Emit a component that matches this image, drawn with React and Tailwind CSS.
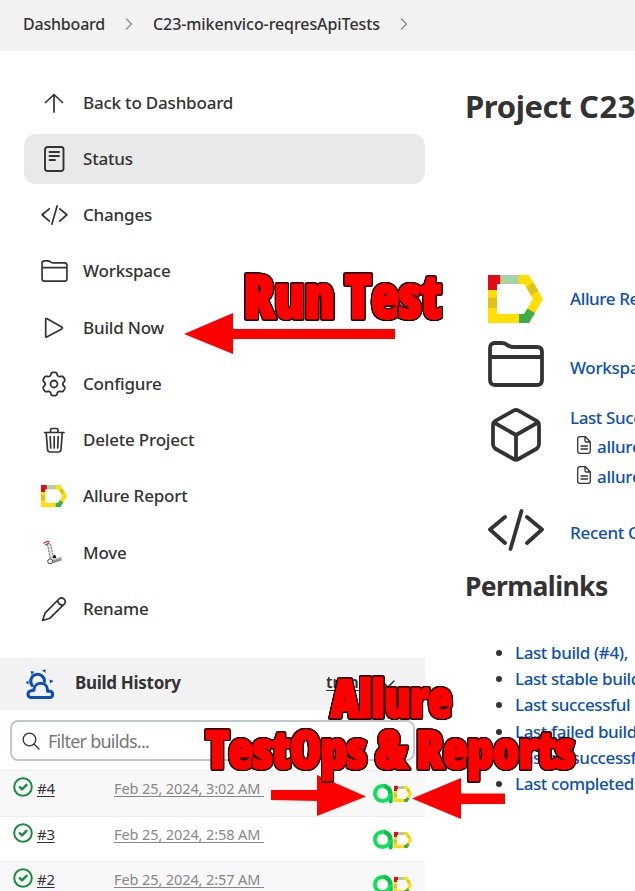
const stroke = {
  fill: 'none',
  stroke: 'currentColor',
  strokeLinecap: 'round',
  strokeLinejoin: 'round',
};

function AllureLogo({ className }) {
  return (
    <svg viewBox="0 0 55 48" className={className} preserveAspectRatio="none">
      <path d="M0 0H41L55 24L41 48H0ZM9 9V39H36L45 24L36 9Z" fill="#ffde00" fillRule="evenodd" />
      <path d="M0 0H12.5V9H9V15H0Z" fill="#e50914" />
      <path d="M12.5 0H30.5V9H12.5Z" fill="#a6d2a5" />
      <path d="M0 22.5H9V33H0ZM38.5 12L45.5 7.5L50.5 16L43 20.5Z" fill="#dfc417" />
      <path d="M31 39H36L39.5 33.5L47 38L41 48H31Z" fill="#3dac49" />
    </svg>
  );
}

function TestOpsLogo() {
  return (
    <svg viewBox="0 0 20 21" className="h-[21px] w-5">
      <path d="M11.500 2.900A7.900 7.900 0 0 1 17.700 10.500V18.600" fill="none" stroke="#09c040" strokeWidth="4" strokeLinecap="round" />
      <circle cx="9.5" cy="10.5" r="7.6" fill="none" stroke="#08e455" strokeWidth="3.8" />
      <path d="M11.500 3.200A7.600 7.600 0 0 1 17.200 10.500" fill="none" stroke="#09c040" strokeWidth="3.8" />
    </svg>
  );
}

function Code({ className, w }) {
  return (
    <svg viewBox="0 0 56 42" className={className} {...stroke} strokeWidth={w}>
      <path d="M17 8L2 20.5L17 34M39 8L54 20.5L39 34M33.5 2L22.5 40" />
    </svg>
  );
}

function Folder({ className, w }) {
  return (
    <svg viewBox="0 0 56 46" className={className} {...stroke} strokeWidth={w}>
      <path d="M2 16V7Q2 2 7 2H14Q17 2 20 4.500Q22.500 6 26 6H49Q54 6 54 11V39Q54 44 49 44H7Q2 44 2 39V16H54" />
    </svg>
  );
}

function ArrowUp() {
  return (
    <svg viewBox="0 0 26 26" className="size-[26px]" {...stroke} strokeWidth="1.7">
      <path d="M13 22V4.500M4.500 12.500L13 4.500L21.500 12.500" />
    </svg>
  );
}

function Status() {
  return (
    <svg viewBox="0 0 26 26" className="size-[26px]" {...stroke} strokeWidth="1.9">
      <rect x="4" y="1" width="18.500" height="24" rx="2.500" />
      <path d="M8.500 6H18M8.500 10H18M8.500 14H14" />
    </svg>
  );
}

function Play() {
  return (
    <svg viewBox="0 0 26 26" className="size-[26px]" {...stroke} strokeWidth="1.7">
      <path d="M4.700 4.200Q4.700 3.200 5.700 3.600L20.700 12Q22 13 20.700 13.900L5.700 22Q4.700 22.300 4.700 21.300Z" />
    </svg>
  );
}

const gearOutline = Array.from({ length: 120 }, (_, i) => {
  const angle = (i * Math.PI) / 60;
  const radius = 10.2 + 1.5 * Math.tanh(1.8 * Math.cos(6 * angle) + 0.5);
  return `${(13 + radius * Math.sin(angle)).toFixed(2)} ${(13 - radius * Math.cos(angle)).toFixed(2)}`;
}).join('L');

function Gear() {
  return (
    <svg viewBox="0 0 26 26" className="size-[26px]" {...stroke} strokeWidth="1.8">
      <circle cx="13" cy="13" r="3.5" />
      <path d={`M${gearOutline}Z`} />
    </svg>
  );
}

function Trash() {
  return (
    <svg viewBox="0 0 26 26" className="size-[26px]" {...stroke} strokeWidth="1.7">
      <path d="M3.500 5.500H23M5.200 5.500L6.500 22.500Q6.800 25 9 25H17.500Q19.700 25 20 22.500L21.300 5.500M9.500 5V3Q9.500 1.500 11 1.500H15.500Q17 1.500 17 3V5M13.200 9.500V21M9.200 9.500L9.700 21M17.200 9.500L16.700 21" />
    </svg>
  );
}

function Dolly() {
  return (
    <svg viewBox="0 0 26 26" className="size-[26px]">
      <path d="M6.500 4.500L9.500 4L12.500 18L9.500 20Z" fill="#e4e4e4" />
      <path d="M6.500 4.500L9.500 20M9.500 4L12.500 17" fill="none" stroke="#666" strokeWidth="1" strokeDasharray="2 1" />
      <path d="M2.500 3.500L5 1.800L8.500 1.500M4 5L8.500 3.200" fill="none" stroke="#b93a44" strokeWidth="1.300" />
      <path d="M10.500 20.500L20.500 17V20.500L12 23.200Z" fill="#8f8f8f" />
      <path d="M12 18.500L20.500 16.500V18L12 20.500Z" fill="#c3c7bc" />
      <path d="M11.500 18Q12 13.500 15 16V18Z" fill="#222" />
      <circle cx="9.200" cy="21.300" r="2.500" fill="#eee" stroke="#444" strokeWidth="1" />
    </svg>
  );
}

function Pencil() {
  return (
    <svg viewBox="0 0 26 26" className="size-[26px]" {...stroke} strokeWidth="1.7">
      <path d="M1.500 24.500L4 17.200L18 3Q20.300 .8 23 3Q25.500 5.500 23.200 8.200L9 22.200ZM16.700 4.500Q17.500 9 22 9.300" />
    </svg>
  );
}

function Weather() {
  return (
    <svg viewBox="0 0 30 32" className="h-8 w-[30px] text-[#0b4fb8]" {...stroke} strokeWidth="3">
      <path d="M4.800 29.500H24.200A3.200 3.200 0 0 0 24.200 23.300H21.500V21.500A6.800 6.800 0 0 0 8 21V22.300Q2 22.500 2 26Q2 29.300 4.800 29.500Z" />
      <path d="M6.200 17.500A6.900 6.900 0 1 1 18.500 13.500" />
      <path d="M4.500 3L8.500 3.700L5.500 6.800ZM16 2.500L19.500 1.200V5ZM-.2 14.500L2.500 12.500V16.500ZM23.500 11.500L27.500 13L24 15.500Z" fill="currentColor" stroke="none" />
    </svg>
  );
}

function Cube() {
  return (
    <svg viewBox="0 0 50 54" className="h-[54px] w-[50px]" {...stroke} strokeWidth="3.800">
      <path d="M22.500 2.700Q25 1.300 27.500 2.700L46 13.200Q48 14.500 48 17V36Q48 39 46 40.500L27.500 51Q25 52.500 22.500 51L4 40.500Q2 39 2 36V17Q2 14.500 4 13.200ZM3 14.500L25 27L47 14.500M25 27V51" />
    </svg>
  );
}

function Doc() {
  return (
    <svg viewBox="0 0 14 18" className="h-[18px] w-3.5 shrink-0" {...stroke} strokeWidth="1.300">
      <path d="M8.500 .7H3Q.7 .7 .7 3V15Q.7 17.300 3 17.300H11Q13.300 17.300 13.300 15V6ZM8 .7V4.500Q8 6 9.500 6H13.300M4 10H10.500M4 13H10.500" />
    </svg>
  );
}

function Check() {
  return (
    <svg viewBox="0 0 20 20" className="size-5 text-[#158f3e]" {...stroke} strokeWidth="2">
      <circle cx="10" cy="10" r="8.800" />
      <path d="M6.800 10.200L9 12.300L13.500 7.800" strokeWidth="2.400" />
    </svg>
  );
}

function Chevron() {
  return (
    <svg viewBox="0 0 8 12" className="h-3 w-2 shrink-0 text-[#909090]" {...stroke} strokeWidth="1.500">
      <path d="M1.500 1L6.500 6L1.500 11" />
    </svg>
  );
}

const tasks = [
  ['Back to Dashboard', <ArrowUp />],
  ['Status', <Status />, true],
  ['Changes', <Code className="h-5 w-[27px]" w="3.6" />],
  ['Workspace', <Folder className="h-[22px] w-[27px]" w="3.5" />],
  ['Build Now', <Play />],
  ['Configure', <Gear />],
  ['Delete Project', <Trash />],
  ['Allure Report', <AllureLogo className="h-[22px] w-[26px]" />],
  ['Move', <Dolly />],
  ['Rename', <Pencil />],
];

const builds = [
  ['#4', 'Feb 25, 2024, 3:02 AM', 'h-[46px] bg-[#f8f8f8]'],
  ['#3', 'Feb 25, 2024, 2:58 AM', 'h-[45px] bg-white'],
  ['#2', 'Feb 25, 2024, 2:57 AM', 'h-[45px] bg-[#f8f8f8]'],
];

const permalinks = [
  'Last build (#4),',
  'Last stable build (#4),',
  'Last successful build (#4),',
  'Last failed build (#1),',
  'Last unsuccessful build (#1),',
  'Last completed build (#4),',
];

function Caption({ x, y, size, width, children }) {
  const box = { x, y, fontSize: size, textLength: width, lengthAdjust: 'spacingAndGlyphs', strokeLinejoin: 'miter' };
  return (
    <text {...box} fill="#f00" stroke="#f00" strokeWidth="3" className="[filter:drop-shadow(1px_0_0_#000)_drop-shadow(-1px_0_0_#000)_drop-shadow(0_1px_0_#000)_drop-shadow(0_-1px_0_#000)]">
      {children}
    </text>
  );
}

function Annotations() {
  return (
    <svg viewBox="0 0 635 891" className="pointer-events-none absolute left-0 top-0 h-[891px] w-[635px]">
      <g fill="#f00">
        <path d="M184 334L233 313V329H395V339H233V354Z" />
        <path d="M366 796.500L317 775V790L271 790V800L317 801V816Z" />
        <path d="M412 798.500L461 778V793.500H505V804H461V819Z" />
      </g>
      <g className="font-['Open_Sans',sans-serif] font-extrabold [font-stretch:75%]">
        <Caption x="243.5" y="317.5" size="61" width="198">Run Test</Caption>
        <Caption x="331" y="716.5" size="51" width="121">Allure</Caption>
        <Caption x="206" y="768" size="51" width="369">TestOps &amp; Reports</Caption>
      </g>
    </svg>
  );
}

export default function App() {
  return (
    <div className="relative h-[891px] w-[635px] overflow-hidden whitespace-nowrap bg-white font-['Noto_Sans','Open_Sans',sans-serif] text-[17px] font-medium leading-6 text-[#333]">
      <header className="flex h-[51px] items-center bg-[#f2f2f2] pb-[3px] pl-[23px] text-base">
        <span className="w-[82px] tracking-[-0.2px]">Dashboard</span>
        <span className="flex w-12 justify-center"><Chevron /></span>
        <span className="w-[227px] tracking-[-0.08px]">C23-mikenvico-reqresApiTests</span>
        <span className="flex w-12 justify-center"><Chevron /></span>
      </header>
      <div className="flex h-[840px]">
        <aside className="w-[425px] shrink-0">
          <nav className="flex h-[607px] flex-col gap-[6.25px] pl-6 pt-[26.500px]">
            {tasks.map(([label, icon, active]) => (
              <a key={label} className={`flex h-[50px] shrink-0 items-center rounded-xl ${active ? 'bg-[#e9e9e9]' : ''}`}>
                <span className="flex w-[59px] justify-center pl-px">{icon}</span>
                <span className="tracking-[-0.2px]">{label}</span>
              </a>
            ))}
          </nav>
          <section>
            <div className="flex h-[52px] items-center bg-[#f2f2f2] pl-[26px]">
              <Weather />
              <h2 className="ml-[19px] w-[251px] pb-0.5 text-[17px] font-bold tracking-[-0.3px]">Build History</h2>
              <a className="flex items-center gap-3 pb-1 text-base font-semibold underline underline-offset-2">
                trend
                <svg viewBox="0 0 14 8" className="mt-1 h-2 w-3.5" {...stroke} strokeWidth="1.600"><path d="M1 1L7 7L13 1" /></svg>
              </a>
            </div>
            <div className="h-[60px] px-2.5 pt-2.5">
              <div className="flex h-[41px] items-center rounded-lg border-2 border-[#bfcacf] pl-[10px] text-lg font-normal text-[#777]">
                <svg viewBox="0 0 18 18" className="mr-2 size-[18px] text-[#333]" {...stroke} strokeWidth="1.300">
                  <circle cx="7.500" cy="7.500" r="6.300" /><path d="M12 12L17 17" />
                </svg>
                <span className="tracking-[-0.75px]">Filter builds...</span>
              </div>
            </div>
            {builds.map(([id, date, row]) => (
              <div key={id} className={`flex items-start border-t border-[#ededed] pl-[13px] pt-1.5 text-[15px] font-normal ${row}`}>
                <Check />
                <a className="ml-1 w-[77px] leading-[22px] tracking-[-0.3px] underline underline-offset-2">{id}</a>
                <a className="w-[259px] whitespace-pre text-[14.5px] leading-[22px] tracking-[-0.1px] text-[#888] underline underline-offset-2">{date + ' '}</a>
                <span className="mt-1.5 flex items-center"><TestOpsLogo /><AllureLogo className="ml-px h-4 w-[18px]" /></span>
              </div>
            ))}
          </section>
        </aside>
        <main className="ml-10 w-[170px] overflow-hidden text-[#0b50b8]">
          <h1 className="mt-[35px] h-[186px] text-[31px] font-bold leading-10 tracking-[-0.4px] text-[#333]">Project <span className="tracking-[0.6px]">C23-mikenvico-reqresApiTests</span></h1>
          <div className="flex h-[54px] items-center">
            <AllureLogo className="ml-[23px] mr-[27px] h-12 w-[55px] shrink-0" />
            <a className="tracking-[-0.4px]">Allure Report</a>
          </div>
          <div className="flex h-[83px] items-center">
            <span className="mb-[8px] ml-[23px] mr-[26px] text-[#333]"><Folder className="h-[46px] w-14" w="3.8" /></span>
            <a className="tracking-[-0.3px]">Workspace</a>
          </div>
          <div className="flex h-[89px] items-start">
            <span className="-mt-px ml-[26px] mr-[29px] text-[#333]"><Cube /></span>
            <div className="-mt-[3px]">
              <a className="tracking-[-0.4px]">Last Successful Artifacts</a>
              {['allure-report.zip', 'allure-results.zip'].map((name) => (
                <div key={name} className="flex h-[30px] items-center pl-[7px] pt-1">
                  <span className="mb-1 mr-1.5 text-[#333]"><Doc /></span>
                  <a className="tracking-[-0.3px]">{name}</a>
                </div>
              ))}
            </div>
          </div>
          <div className="flex h-[70px] items-center pb-[7px]">
            <span className="ml-[23px] mr-[26px] text-[#333]"><Code className="h-[42px] w-14" w="3.8" /></span>
            <a className="pt-1.5 tracking-[-0.3px]">Recent Changes</a>
          </div>
          <h2 className="text-[26.5px] font-bold leading-9 tracking-[-0.6px] text-[#333]">Permalinks</h2>
          <ul className="mt-9 list-disc pl-[50px] leading-[26.200px] marker:text-[#333]">
            {permalinks.map((link) => (
              <li key={link}><a className="tracking-[-0.4px]">{link}</a></li>
            ))}
          </ul>
        </main>
      </div>
      <Annotations />
    </div>
  );
}
